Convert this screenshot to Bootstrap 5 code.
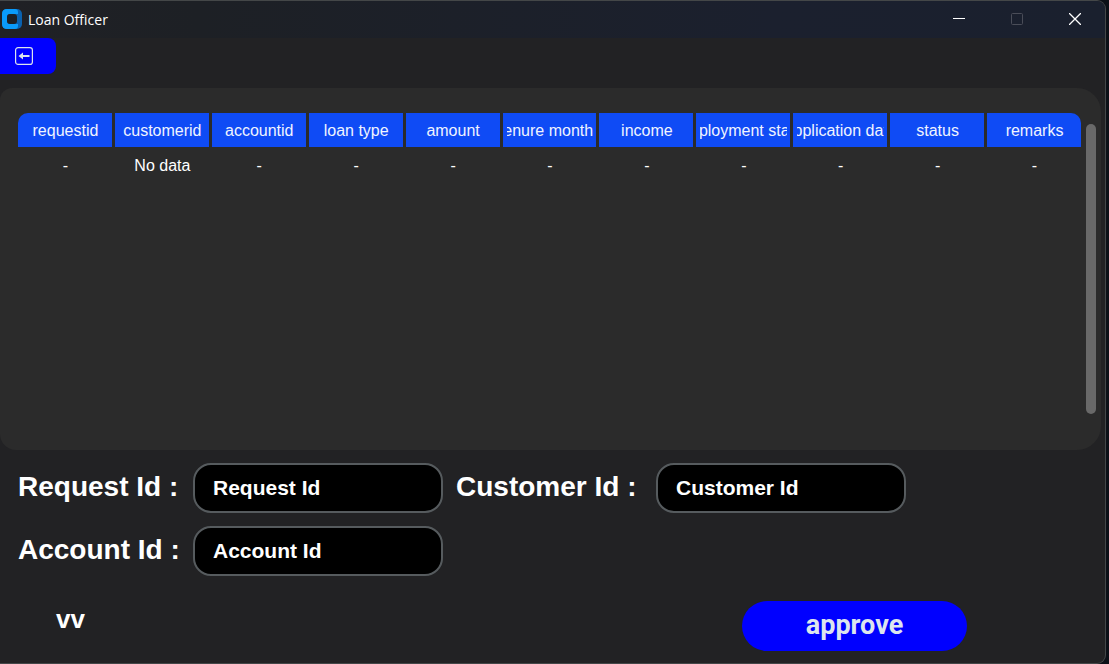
<!DOCTYPE html>
<html lang="en">
<head>
<meta charset="utf-8">
<meta name="viewport" content="width=device-width, initial-scale=1">
<title>Loan Officer</title>
<link href="https://cdn.jsdelivr.net/npm/bootstrap@5.3.0/dist/css/bootstrap.min.css" rel="stylesheet">
<style>
  body { background: #0c1017; color: #fff; font-family: "Liberation Sans", Arial, sans-serif; }
  .app-window { background: #222224; border: 1px solid #444748; border-left: 0; border-radius: 0 9px 9px 0; margin-right: 3px; }
  .title-bar { height: 37px; padding: 0 1px 1px 2px; background: linear-gradient(90deg, #202125, #1d2025 18%, #1b202e 70%, #1a202e); font-family: "Open Sans", "Noto Sans", sans-serif; }
  .title-bar h1 { font-size: 14px; line-height: 20px; font-weight: 400; padding: 1px 0 0 6px; }
  .win-btn { width: 58px; height: 36px; background: none; border: 0; padding: 0; color: #fff; }
  .win-btn:disabled { color: #4a4d58; }
  .win-btn svg, .back-btn svg { display: block; margin: auto; }
  .back-btn { width: 56px; height: 36px; background: #00f; border: 0; border-radius: 0 8px 8px 0; padding: 0 8px 0 0; color: #dce4ee; }
  .data-panel { background: #2b2b2b; height: 362px; border-radius: 12px 24px 24px 16px; margin: 14px 4px 0 0; padding: 22px 5px 0 15px; }
  .table-area { padding-right: 2px; min-width: 0; }
  .loan-table { table-layout: fixed; border-collapse: separate; border-spacing: 3px; font-size: 16px; line-height: 20px; }
  .loan-table th { background: #0f4bf5; font-weight: 400; height: 34px; padding: 1px 3px 0 4px; color: #f0f4ff; }
  .loan-table td { height: 31px; padding: 0 3px 0 4px; text-align: center; }
  .loan-table th:first-child { border-top-left-radius: 10px; }
  .loan-table th:last-child { border-top-right-radius: 10px; }
  .clip { display: flex; justify-content: center; overflow: hidden; white-space: nowrap; }
  .scroll-thumb { width: 10px; height: 290px; border-radius: 5px; background: #696969; margin-top: 14px; }
  .id-form { display: grid; grid-template-columns: 175px 250px 213px 250px; row-gap: 13px; padding: 13px 0 0 18px; }
  .id-form label { font-size: 28px; line-height: 48px; font-weight: 700; white-space: nowrap; }
  .id-form label.second { padding-left: 13px; }
  .id-form input { width: 250px; height: 50px; background: #000; border: 2px solid #565b5e; border-radius: 18px; padding: 0 18px; font-size: 21px; font-weight: 700; color: #fff; }
  .id-form input::placeholder { color: #fff; opacity: 1; }
  .actions { padding: 25px 138px 12px 56px; }
  .result-text { font-size: 26px; line-height: 36px; font-weight: 700; }
  .approve-btn { width: 225px; height: 50px; background: #00f; border: 0; border-radius: 25px; color: #dce4ee; font-size: 27px; line-height: 30px; font-weight: 700; font-family: Roboto, sans-serif; padding: 0 0 2px; }
</style>
</head>
<body>
<div class="app-window overflow-hidden">
  <header class="title-bar d-flex align-items-center">
    <svg width="20" height="20" viewBox="0 0 20 20" class="flex-shrink-0" aria-hidden="true">
      <rect width="20" height="20" rx="5" fill="#0a62b0"/>
      <path d="M5 0H13a3 3 0 0 1 3 3V5H8Q5 5 5 8V12Q5 15 8 15H16V17a3 3 0 0 1-3 3H5Q0 20 0 15V5Q0 0 5 0Z" fill="#0a9bfa"/>
      <rect x="5" y="5" width="10" height="10" rx="3" fill="#1d2025"/>
    </svg>
    <h1 class="mb-0">Loan Officer</h1>
    <div class="ms-auto d-flex">
      <button class="win-btn" type="button" aria-label="Minimize"><svg width="12" height="12"><path d="M0 5.500H12" stroke="currentColor" fill="none"/></svg></button>
      <button class="win-btn" type="button" aria-label="Maximize" disabled><svg width="12" height="12"><rect x=".5" y=".5" width="11" height="11" rx="1" stroke="currentColor" fill="none"/></svg></button>
      <button class="win-btn" type="button" aria-label="Close"><svg width="12" height="12"><path d="M0 0L12 12M12 0L0 12" stroke="currentColor" stroke-width="1.3" fill="none"/></svg></button>
    </div>
  </header>

  <button class="back-btn d-block" type="button" aria-label="Back">
    <svg width="18" height="18" viewBox="0 0 18 18"><rect x=".6" y=".6" width="16.800" height="16.800" rx="2.500" fill="none" stroke="currentColor" stroke-width="1.200"/><path d="M3.500 9L8 5.500V8H14.500V10H8V12.500Z" fill="currentColor"/></svg>
  </button>

  <main>
    <section class="data-panel d-flex align-items-start">
      <div class="table-area flex-grow-1">
      <table class="loan-table w-100">
        <thead>
          <tr>
            <th scope="col"><span class="clip">requestid</span></th>
            <th scope="col"><span class="clip">customerid</span></th>
            <th scope="col"><span class="clip">accountid</span></th>
            <th scope="col"><span class="clip">loan type</span></th>
            <th scope="col"><span class="clip">amount</span></th>
            <th scope="col"><span class="clip">tenure months</span></th>
            <th scope="col"><span class="clip">income</span></th>
            <th scope="col"><span class="clip">employment status</span></th>
            <th scope="col"><span class="clip">application date</span></th>
            <th scope="col"><span class="clip">status</span></th>
            <th scope="col"><span class="clip">remarks</span></th>
          </tr>
        </thead>
        <tbody>
          <tr><td>-</td><td>No data</td><td>-</td><td>-</td><td>-</td><td>-</td><td>-</td><td>-</td><td>-</td><td>-</td><td>-</td></tr>
        </tbody>
      </table>
      </div>
      <div class="scroll-thumb flex-shrink-0"></div>
    </section>

    <form>
      <div class="id-form">
        <label for="requestId">Request Id :</label>
        <input id="requestId" type="text" placeholder="Request Id">
        <label for="customerId" class="second">Customer Id :</label>
        <input id="customerId" type="text" placeholder="Customer Id">
        <label for="accountId">Account Id :</label>
        <input id="accountId" type="text" placeholder="Account Id">
      </div>
      <div class="actions d-flex justify-content-between align-items-start">
        <output class="result-text">vv</output>
        <button class="approve-btn" type="button">approve</button>
      </div>
    </form>
  </main>
</div>
<script src="https://cdn.jsdelivr.net/npm/bootstrap@5.3.0/dist/js/bootstrap.bundle.min.js"></script>
</body>
</html>
